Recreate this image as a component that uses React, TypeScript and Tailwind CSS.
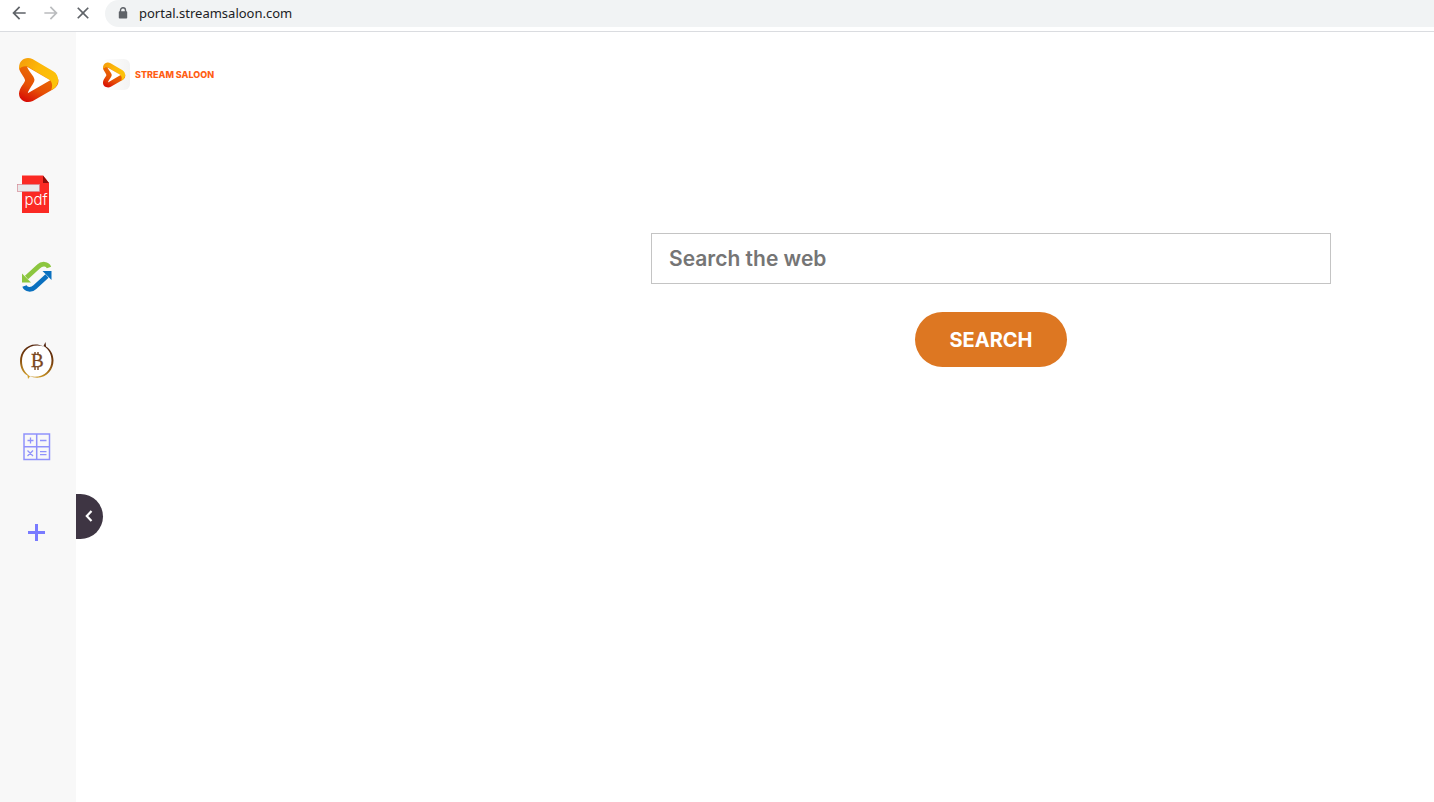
import React from 'react';
import { MdArrowBack, MdArrowForward, MdClose } from 'react-icons/md';

const PlayMark = ({ id, className }: { id: string; className: string }) => (
  <svg viewBox="54 50 122 137" className={className} aria-hidden="true">
    <defs>
      <linearGradient id={`${id}-body`} x1="0.6" y1="0" x2="0.1" y2="1">
        <stop offset="0.2" stopColor="#ea6a04" />
        <stop offset="0.6" stopColor="#e65005" />
        <stop offset="1" stopColor="#d60606" />
      </linearGradient>
      <linearGradient id={`${id}-top`} x1="0" y1="0" x2="1" y2="0.6">
        <stop offset="0" stopColor="#f39a0b" />
        <stop offset="0.5" stopColor="#fdb80a" />
        <stop offset="1" stopColor="#fcc20a" />
      </linearGradient>
    </defs>
    {/* Lower band, from the left notch round to the right tip */}
    <path
      d="M57 82C57 94 75 112 75 119C75 127 58 140 57 158C56 178 78 190 98 181L160 145C172 138 176 128 174 116L150 112L80 70Z"
      fill={`url(#${id}-body)`}
    />
    {/* Upper band */}
    <path
      d="M57 82C57 60 76 47 97 56L160 93C176 103 179 127 163 142C160 145 156 147 153 148C157 137 157 126 148 118L82 78C72 76 62 79 58 87Z"
      fill={`url(#${id}-top)`}
    />
    <path d="M81 79L150 119L83 158C85 147 103 128 103 118C103 107 84 91 81 79Z" fill="#fff" />
  </svg>
);

const LockIcon = () => (
  <svg viewBox="0 0 10 12" className="w-[10px] h-3" aria-hidden="true">
    <path d="M2.500 5V3.300A2.500 2.500 0 0 1 7.500 3.300V5" fill="none" stroke="#5f6368" strokeWidth="1.400" />
    <rect x="0.800" y="4.300" width="8.400" height="7.200" rx="0.800" fill="#5f6368" />
  </svg>
);

const PdfIcon = () => (
  <svg viewBox="0 0 44 44" className="w-11 h-11" aria-hidden="true">
    <path d="M6 5.500H27L33 13V43H6Z" fill="#fb2a24" />
    <path d="M27 5.500L33 13H27Z" fill="#8e0d0a" />
    <rect x="1.500" y="14.500" width="22" height="7" fill="#e9e9ea" stroke="#d58a96" strokeWidth="0.700" />
    <text x="8.500" y="35" className="font-['Inter',sans-serif] font-light text-[15px]" fill="#fff">pdf</text>
  </svg>
);

const ConvertIcon = () => (
  <svg viewBox="0 0 44 44" className="w-11 h-11" aria-hidden="true">
    <path d="M33 12.500C31.500 8.500 26 8 22.500 11.500L10.500 22.500" fill="none" stroke="#8cc63f" strokeWidth="4.600" />
    <path d="M6 18.500V27.500H15Z" fill="#8cc63f" />
    <path d="M8.500 31C10 35 15.500 35.500 19 32L31 21" fill="none" stroke="#0a70bf" strokeWidth="4.600" />
    <path d="M35.500 25V16H26.500Z" fill="#0a70bf" />
  </svg>
);

const BitcoinIcon = () => (
  <svg viewBox="0 0 44 44" className="w-11 h-11" aria-hidden="true">
    <defs>
      <linearGradient id="coin" gradientUnits="userSpaceOnUse" x1="24" y1="2" x2="17" y2="39">
        <stop offset="0" stopColor="#4a1d0c" />
        <stop offset="0.500" stopColor="#7d430d" />
        <stop offset="1" stopColor="#d8a52a" />
      </linearGradient>
    </defs>
    <circle cx="20.500" cy="21" r="15.500" fill="#fff" />
    <path
      d="M28 6.500C14 0 4 10 4 21C4 28 7 33 11.500 35.500L12 39L14 36.500C8 32 6 27 6 21C6 11 14 2.500 28 6.500Z"
      fill="url(#coin)"
    />
    <path
      d="M13 36C28 42 37.500 31 37.500 20.500C37.500 14 34 9 30 6.500L29.500 2L27.500 6C33 9 35.500 15 35.500 20.500C35.500 31 26 39.500 13 36Z"
      fill="url(#coin)"
    />
    <text
      x="15"
      y="27"
      className="font-['Liberation_Serif',serif] text-[19px]"
      fill="#7a451c"
      stroke="#7a451c"
      strokeWidth="0.300"
    >
      B
    </text>
    <path d="M19 12V15M22 12V15M19 27V30M22 27V30" stroke="#7a451c" strokeWidth="1.400" />
  </svg>
);

const CalculatorIcon = () => (
  <svg viewBox="0 0 44 44" className="w-11 h-11" fill="none" stroke="#9092fb" aria-hidden="true">
    <path d="M8 9H33.500V34.500H8ZM20.700 9V34.500M8 21.700H33.500" strokeWidth="1.500" />
    <path d="M11.500 15.500H17.500M14.500 12.500V18.500M24 15.500H30.500" strokeWidth="1.300" />
    <path d="M11.500 25.500L17 31M17 25.500L11.500 31M24 26.700H30.500M24 29.700H30.500" strokeWidth="1.300" />
  </svg>
);

const PlusIcon = () => (
  <svg viewBox="0 0 44 44" className="w-11 h-11" aria-hidden="true">
    <path d="M12 22.500H29M20.500 14V31" stroke="#797bff" strokeWidth="3" />
  </svg>
);

const shortcuts = [
  { label: 'PDF tools', icon: <PdfIcon /> },
  { label: 'Converter', icon: <ConvertIcon /> },
  { label: 'Crypto', icon: <BitcoinIcon /> },
  { label: 'Calculator', icon: <CalculatorIcon /> }
];

const BrowserBar = () => (
  <header className="flex items-start h-8 pl-[9px] bg-white border-b border-[#dadce0] text-[#5f6368]">
    <div className="flex items-center gap-3 h-[26px]">
      <button aria-label="Back"><MdArrowBack className="w-5 h-5" /></button>
      <button aria-label="Forward" disabled className="text-[#babcbe]"><MdArrowForward className="w-5 h-5" /></button>
      <button aria-label="Stop loading"><MdClose className="w-5 h-5" /></button>
    </div>
    <div className="flex flex-1 items-center gap-[11px] h-[27px] ml-3 pl-[13px] pb-px bg-[#f1f3f4] rounded-l-full">
      <LockIcon />
      <input
        aria-label="Address"
        defaultValue="portal.streamsaloon.com"
        className="flex-1 min-w-0 bg-transparent outline-none font-['Noto_Sans',sans-serif] text-[13px] leading-5 text-[#202124]"
      />
    </div>
  </header>
);

const Sidebar = () => (
  <aside className="relative flex flex-col items-center w-[76px] shrink-0 pt-[25px] bg-[#f8f8f8]">
    <a href="#home" aria-label="Home">
      <PlayMark id="side" className="block w-[41px] h-[46px]" />
    </a>
    <nav className="flex flex-col gap-[41px] mt-[67px]">
      {shortcuts.map((item) => (
        <a key={item.label} href="#apps" aria-label={item.label}>{item.icon}</a>
      ))}
      <button aria-label="Add shortcut"><PlusIcon /></button>
    </nav>

    {/* Collapse handle hangs over the page */}
    <button
      aria-label="Collapse sidebar"
      className="absolute left-full top-[462px] flex items-center justify-center w-[27px] h-[45px] pr-[2px] pb-px bg-[#3e3543] rounded-r-full"
    >
      <svg viewBox="0 0 8 12" className="w-2 h-3" aria-hidden="true">
        <path d="M6.500 1L1.800 6L6.500 11" fill="none" stroke="#fff" strokeWidth="2.200" />
      </svg>
    </button>
  </aside>
);

const SearchForm = () => (
  <form
    onSubmit={(e) => e.preventDefault()}
    className="flex flex-col items-center gap-7 w-[680px] max-w-full"
  >
    <input
      type="search"
      aria-label="Search the web"
      placeholder="Search the web"
      className="w-full h-[51px] px-[17px] bg-white border border-[#c4c4c4] outline-none text-[21px] font-semibold placeholder:text-[#757575]"
    />
    <button type="submit" className="w-[152px] h-[55px] rounded-full bg-[#dd7722] text-xl font-bold text-white">
      SEARCH
    </button>
  </form>
);

const App = () => {
  return (
    <div className="flex flex-col min-h-screen bg-white font-['Inter',sans-serif]">
      <BrowserBar />
      <div className="flex flex-1">
        <Sidebar />
        <main className="flex-1 min-w-0">
          <a href="#home" className="flex items-center gap-[5px] w-fit mt-[27px] ml-[25px]">
            <span className="flex items-center justify-center w-[29px] h-[31px] pr-1 rounded-md bg-gradient-to-r from-white to-[#f3f3f3]">
              <PlayMark id="brand" className="w-6 h-[26px]" />
            </span>
            <span className="text-[9px] leading-4 font-extrabold text-[#ff5e14]">STREAM SALOON</span>
          </a>
          <div className="flex justify-end mt-[143px] pr-[103px]">
            <SearchForm />
          </div>
        </main>
      </div>
    </div>
  );
};

export default App;
